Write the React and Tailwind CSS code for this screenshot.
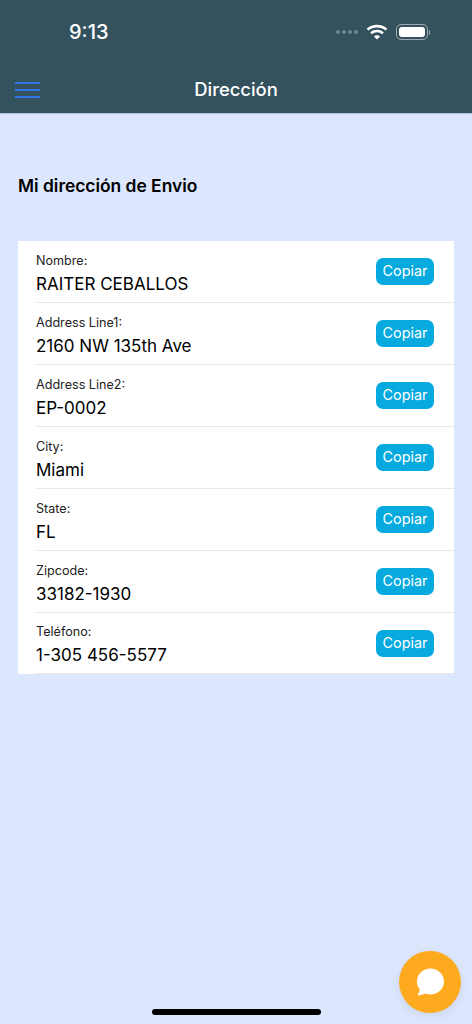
import React from 'react'

const rows = [
  { label: 'Nombre:', value: 'RAITER CEBALLOS' },
  { label: 'Address Line1:', value: '2160 NW 135th Ave' },
  { label: 'Address Line2:', value: 'EP-0002' },
  { label: 'City:', value: 'Miami' },
  { label: 'State:', value: 'FL' },
  { label: 'Zipcode:', value: '33182-1930' },
  { label: 'Teléfono:', value: '1-305 456-5577' },
]

const StatusIcons = () => (
  <div className='flex items-center'>
    <div className='flex gap-[2px]'>
      <span className='h-[4px] w-[4px] rounded-full bg-white/30' />
      <span className='h-[4px] w-[4px] rounded-full bg-white/30' />
      <span className='h-[4px] w-[4px] rounded-full bg-white/30' />
      <span className='h-[4px] w-[4px] rounded-full bg-white/30' />
    </div>
    <svg width='22' height='16' viewBox='0 0 22 16' className='ml-[8px]' fill='none' stroke='#fff' strokeWidth='2.6'>
      <path d='M1.5 5.6C6.8 0.9 15.2 0.9 20.5 5.6' />
      <path d='M5 9.2C8.4 6.3 13.6 6.3 17 9.2' />
      <path d='M11 15.6L7.9 12.4C9.7 11 12.3 11 14.1 12.4Z' fill='#fff' stroke='none' />
    </svg>
    <div className='ml-[8px] flex items-center'>
      <div className='flex h-[16px] w-[32px] items-center rounded-[5px] border border-white/50 p-[2px]'>
        <div className='h-full w-full rounded-[3px] bg-white' />
      </div>
      <div className='ml-[1px] h-[5px] w-[1.5px] rounded-r-sm bg-white/50' />
    </div>
  </div>
)

const Row = ({ label, value }) => (
  <div className='ml-[18px] flex h-[62px] items-center border-b border-[#e8e8e8] last:h-[61px]'>
    <div className='flex-1 pt-[4px]'>
      <p className='text-[12.6px] leading-[18px] text-[#222]'>{label}</p>
      <p className='mt-[2px] text-[17px] leading-[24px] text-black'>{value}</p>
    </div>
    <button type='button' className='mr-[20px] h-[27px] w-[58px] rounded-[7px] bg-[#06aade] pb-[1px] text-[14.4px] text-white'>
      Copiar
    </button>
  </div>
)

const App = () => {
  return (
    <div className="relative h-[1024px] w-[472px] overflow-hidden bg-[#dce7fe] font-['Inter',sans-serif]">
      <header className='h-[114px] border-b border-[#a9c0d6] bg-[#34525e]'>
        <div className='flex h-[66px] items-start justify-between pl-[69px] pr-[42px]'>
          <span className='mt-[20px] text-[20px] leading-[25px] font-medium text-white'>9:13</span>
          <div className='mt-[24px]'>
            <StatusIcons />
          </div>
        </div>
        <div className='relative flex h-[47px] items-center justify-center'>
          <div className='absolute left-[15px] top-[16px] flex w-[25px] flex-col gap-[5px]'>
            <span className='h-[2px] bg-[#2f74e8]' />
            <span className='h-[2px] bg-[#2f74e8]' />
            <span className='h-[2px] bg-[#2f74e8]' />
          </div>
          <h1 className='text-[18.4px] font-medium text-white'>Dirección</h1>
        </div>
      </header>

      <h2 className='mt-[61px] ml-[18px] text-[17.4px] leading-[22px] font-semibold text-black'>Mi dirección de Envio</h2>

      <div className='mx-[18px] mt-[44px] bg-white'>
        {rows.map((row) => (
          <Row key={row.label} label={row.label} value={row.value} />
        ))}
      </div>

      <button
        type='button'
        aria-label='Chat'
        className='absolute left-[399px] top-[951px] flex h-[62px] w-[62px] items-center justify-center rounded-full bg-[#fdaa1f] shadow-[0_3px_8px_rgba(0,0,0,0.08)]'
      >
        <svg width='28' height='28' viewBox='0 0 28 28' fill='#fff'>
          <path d='M14.5 0.5C22 0.5 28 6.3 28 13.6C28 20.9 22 26.6 14.5 26.6C12.6 26.6 10.8 26.2 9.1 25.6C6.9 26.7 4.2 27.4 2.3 27.4C1.7 27.4 1.5 26.8 1.9 26.3C2.9 25.1 3.6 23 3.6 21C1.7 18.9 0.9 16.3 0.9 13.6C0.9 6.3 7 0.5 14.5 0.5Z' />
        </svg>
      </button>

      <div className='absolute left-[152px] top-[1009px] h-[6px] w-[169px] rounded-full bg-black' />
    </div>
  )
}

export default App
